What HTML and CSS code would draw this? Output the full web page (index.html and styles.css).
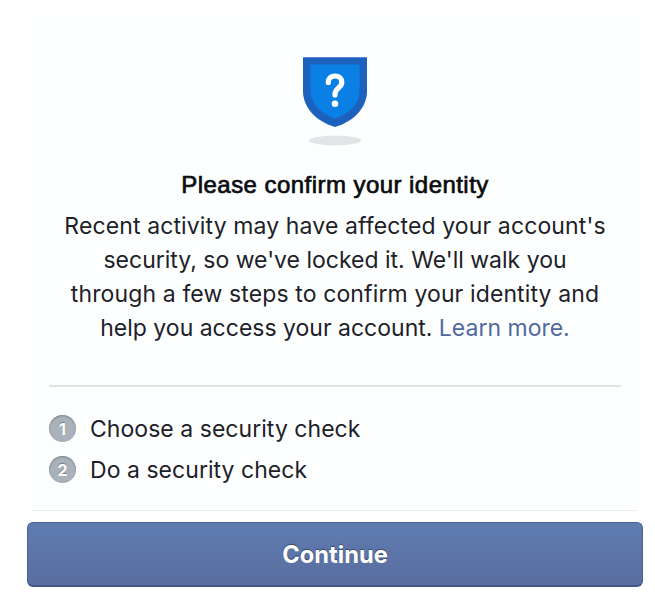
FILE: index.html
```html
<!DOCTYPE html>
<html lang="en">
<head>
    <meta charset="UTF-8">
    <meta name="viewport" content="width=device-width, initial-scale=1.0">
    <title>Confirm Your Identity</title>
    <link rel="stylesheet" href="styles.css">
</head>
<body>
    <div class="card">
        <svg class="shield" width="70" height="92" viewBox="0 0 70 92">
            <ellipse cx="35" cy="84.500" rx="26" ry="5" fill="#e2e4e8"/>
            <path d="M3 1.300 H67 V35 C67 51 55 65 35 71 C15 65 3 51 3 35 Z" fill="#1c62bd"/>
            <path d="M10.500 8.500 H59.500 V35 C59.500 47 50 57.500 35 62.500 C20 57.500 10.500 47 10.500 35 Z" fill="#0a80e4"/>
            <path d="M28.300 26.500 C28.300 22.300 31 20 35 20 C39 20 41.800 22.500 41.800 26.500 C41.800 31.500 35 32.500 35 38 V39" fill="none" stroke="#fff" stroke-width="5.200" stroke-linecap="round"/>
            <circle cx="35" cy="47.800" r="3.300" fill="#fff"/>
        </svg>

        <h1>Please confirm your identity</h1>
        <p class="message">
            <span class="wide">Recent activity may have affected your account's</span><br>
            security, so we've locked it. We'll walk you<br>
            <span class="wide">through a few steps to confirm your identity and</span><br>
            help you access your account. <a href="#">Learn more.</a>
        </p>

        <ol class="steps">
            <li><span class="number">1</span>Choose a security check</li>
            <li><span class="number">2</span>Do a security check</li>
        </ol>
    </div>

    <button class="continue">Continue</button>
</body>
</html>
```
FILE: styles.css
```css
body {
    font-family: Inter, "Liberation Sans", sans-serif;
    margin: 0;
    padding: 16px 12px 0 27px;
    background-color: #fff;
    color: #1d2129;
}

.card {
    box-sizing: border-box;
    height: 495px;
    margin: 0 5px 0 4px;
    padding: 40px 17px 0 18px;
    background-color: #fdfffe;
    border-bottom: 1px solid #ebedee;
    text-align: center;
}

.shield {
    display: block;
    margin: 0 auto;
}

h1 {
    margin: 21px 0 0;
    font-family: "Liberation Sans", Arial, sans-serif;
    font-size: 24px;
    font-weight: normal;
    letter-spacing: 0.45px;
    line-height: 32px;
    color: #0b0c10;
    -webkit-text-stroke: 0.7px #0b0c10;
}

.message {
    margin: 8px 0 0;
    font-size: 23px;
    line-height: 34px;
    white-space: nowrap;
}

.message .wide {
    letter-spacing: 0.12px;
}

.message a {
    color: #5069a0;
    text-decoration: none;
}

/* Numbered list of steps */
.steps {
    margin: 40px 0 0;
    padding: 21px 0 0;
    border-top: 2px solid #e0e3e5;
    list-style: none;
    text-align: left;
}

.steps li {
    display: flex;
    align-items: center;
    height: 41px;
    font-size: 23px;
    letter-spacing: 0.04px;
}

.number {
    width: 27px;
    height: 27px;
    margin-right: 14px;
    border-radius: 50%;
    background-color: #a9b1ba;
    box-shadow: inset 0 1px 2px #7d838b;
    color: #fff;
    font-size: 16px;
    font-weight: bold;
    line-height: 29px;
    text-align: center;
    text-shadow: 0 -1px 1px rgba(0, 0, 0, 0.3);
}

.continue {
    display: block;
    width: 616px;
    height: 65px;
    margin: 11px 0 0;
    padding: 1px 0 0;
    border: 1px solid #48619b;
    border-bottom: 2px solid #435788;
    border-radius: 6px;
    background: linear-gradient(#5e7cb0, #5a6d9f);
    color: #fff;
    font-family: inherit;
    font-size: 23.7px;
    font-weight: bold;
    text-shadow: 0 -1px 1px rgba(0, 0, 0, 0.4);
    cursor: pointer;
}
```
